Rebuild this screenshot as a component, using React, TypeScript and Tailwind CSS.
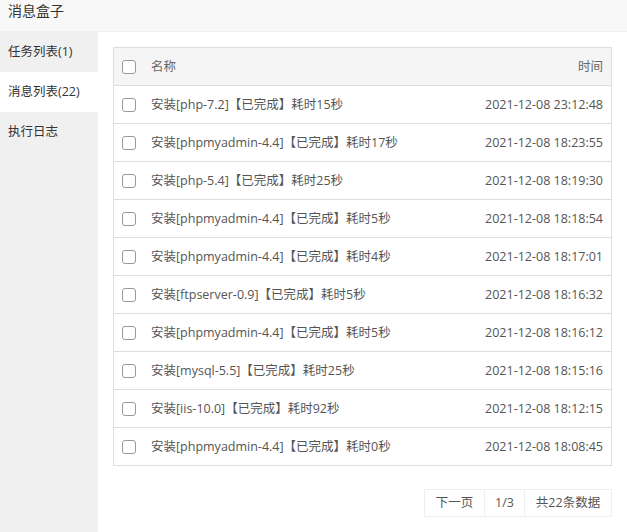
import React from "react";

const rows = [
  ["安装[php-7.2]【已完成】耗时15秒", "2021-12-08 23:12:48"],
  ["安装[phpmyadmin-4.4]【已完成】耗时17秒", "2021-12-08 18:23:55"],
  ["安装[php-5.4]【已完成】耗时25秒", "2021-12-08 18:19:30"],
  ["安装[phpmyadmin-4.4]【已完成】耗时5秒", "2021-12-08 18:18:54"],
  ["安装[phpmyadmin-4.4]【已完成】耗时4秒", "2021-12-08 18:17:01"],
  ["安装[ftpserver-0.9]【已完成】耗时5秒", "2021-12-08 18:16:32"],
  ["安装[phpmyadmin-4.4]【已完成】耗时5秒", "2021-12-08 18:16:12"],
  ["安装[mysql-5.5]【已完成】耗时25秒", "2021-12-08 18:15:16"],
  ["安装[iis-10.0]【已完成】耗时92秒", "2021-12-08 18:12:15"],
  ["安装[phpmyadmin-4.4]【已完成】耗时0秒", "2021-12-08 18:08:45"],
];

function Box() {
  return <span className="block w-[14px] h-[14px] border border-[#999] rounded-[3px] bg-white" />;
}

export default function App() {
  return (
    <div
      className="w-[627px] h-[532px] flex flex-col bg-white text-[#333] overflow-hidden"
      style={{ fontFamily: '"Open Sans", "Noto Sans CJK SC", sans-serif' }}
    >
      <div className="h-[32px] shrink-0 bg-[#f8f8f8] border-b border-[#eee] pl-[8px] pt-[3px] text-[14px] leading-[16px] text-[#333]">
        消息盒子
      </div>
      <div className="flex flex-1 min-h-0">
        <div className="w-[98px] shrink-0 bg-[#f0f0f0] text-[12.5px] leading-[16px]">
          <div className="h-[40px] flex items-center pl-[8px]">任务列表(1)</div>
          <div className="h-[40px] flex items-center pl-[8px] bg-white">消息列表(22)</div>
          <div className="h-[40px] flex items-center pl-[8px]">执行日志</div>
        </div>
        <div className="flex-1 pl-[15px] pr-[15px] pt-[15px]">
          <div className="border border-[#ddd] text-[12.5px] leading-[16px]">
            <div className="h-[37px] bg-[#f5f5f5] flex items-center text-[#666]">
              <div className="w-[37px] pl-[8px] pt-[1px]"><Box /></div>
              <div className="flex-1">名称</div>
              <div className="pr-[8px]">时间</div>
            </div>
            {rows.map(([n, t], i) => (
              <div key={i} className="h-[38px] border-t border-[#ddd] flex items-center text-[#555]">
                <div className="w-[37px] pl-[8px] pt-[1px]"><Box /></div>
                <div className="flex-1">{n}</div>
                <div className="pr-[8px]">{t}</div>
              </div>
            ))}
          </div>
          <div className="flex justify-end mt-[23px]">
            <div className="flex h-[28px] border border-[#eee] text-[12.5px] leading-[16px] text-[#555]">
              <div className="w-[60px] flex items-center justify-center border-r border-[#eee]">下一页</div>
              <div className="w-[40px] flex items-center justify-center border-r border-[#eee]">1/3</div>
              <div className="w-[86px] flex items-center justify-center">共22条数据</div>
            </div>
          </div>
        </div>
      </div>
    </div>
  );
}
